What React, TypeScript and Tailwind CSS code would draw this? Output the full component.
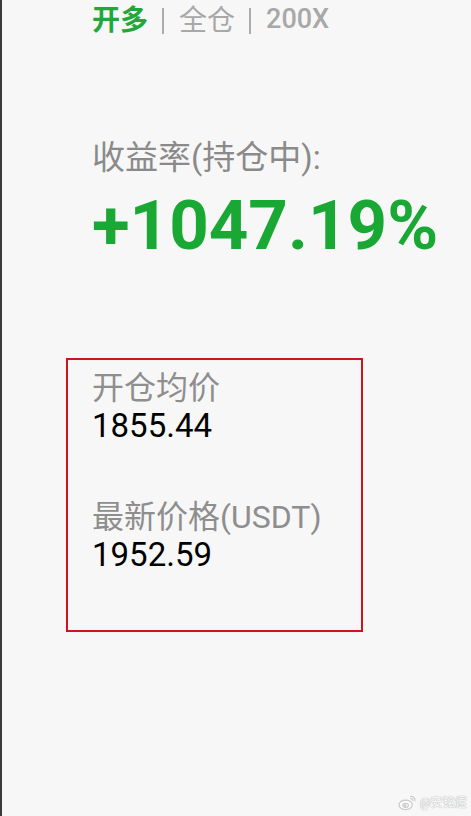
import React from "react";

const font = "font-['Roboto','Noto_Sans_CJK_SC',sans-serif]";

export default function App() {
  return (
    <div
      className={`relative w-[471px] h-[816px] overflow-hidden bg-[#f7f7f7] border-l-2 border-[#3a3a3a] ${font}`}
    >
      <div className="pl-[90px] pt-[4px]">
        <div className="flex items-center h-[34px]">
          <span className="text-[28px] leading-[34px] font-bold text-[#22a83a]">开多</span>
          <span className="ml-[14px] mr-[15px] w-[2px] h-[26px] bg-[#acacac]" />
          <span className="text-[28px] leading-[34px] text-[#a8a8a8]">全仓</span>
          <span className="ml-[14px] mr-[15px] w-[2px] h-[26px] bg-[#acacac]" />
          <span className="text-[27px] leading-[34px] font-medium text-[#a8a8a8] -mt-[4px]">200X</span>
        </div>

        <div className="mt-[100px] text-[33px] leading-[40px] text-[#8a8a8a]">收益率(持仓中):</div>
        <div className="mt-[13px] text-[69px] leading-[70px] font-bold text-[#1aa834]">
          +1047.19%
        </div>

        <div className="-ml-[26px] mt-[97px] w-[297px] h-[274px] border-2 border-[#d0141c] pl-[24px] pt-[9px]">
          <div className="text-[32px] leading-[38px] text-[#8e8e8e]">开仓均价</div>
          <div className="text-[33px] leading-[38px] text-black">1855.44</div>
          <div className="mt-[53px] text-[32px] leading-[38px] text-[#8e8e8e]">最新价格(USDT)</div>
          <div className="text-[33px] leading-[38px] text-black">1952.59</div>
        </div>
      </div>

      <div className="absolute left-[396px] top-[794px] flex items-center gap-[3px] opacity-80 whitespace-nowrap">
        <svg width="19" height="17" viewBox="0 0 20 18" fill="none" stroke="#bdbdbd" strokeWidth="1.2">
          <ellipse cx="8" cy="11.5" rx="7" ry="5" fill="#ffffff" />
          <ellipse cx="8" cy="12" rx="3" ry="2.2" />
          <circle cx="7.5" cy="12.2" r="0.8" fill="#bdbdbd" />
          <path d="M13 2.5a4.5 4.5 0 0 1 5 5" />
          <path d="M13 5a2 2 0 0 1 2.5 2.5" />
        </svg>
        <span className="text-[12px] leading-[16px] text-white [text-shadow:0_0_1px_#9a9a9a,0_0_1px_#9a9a9a]">@安铭煜</span>
      </div>
    </div>
  );
}
